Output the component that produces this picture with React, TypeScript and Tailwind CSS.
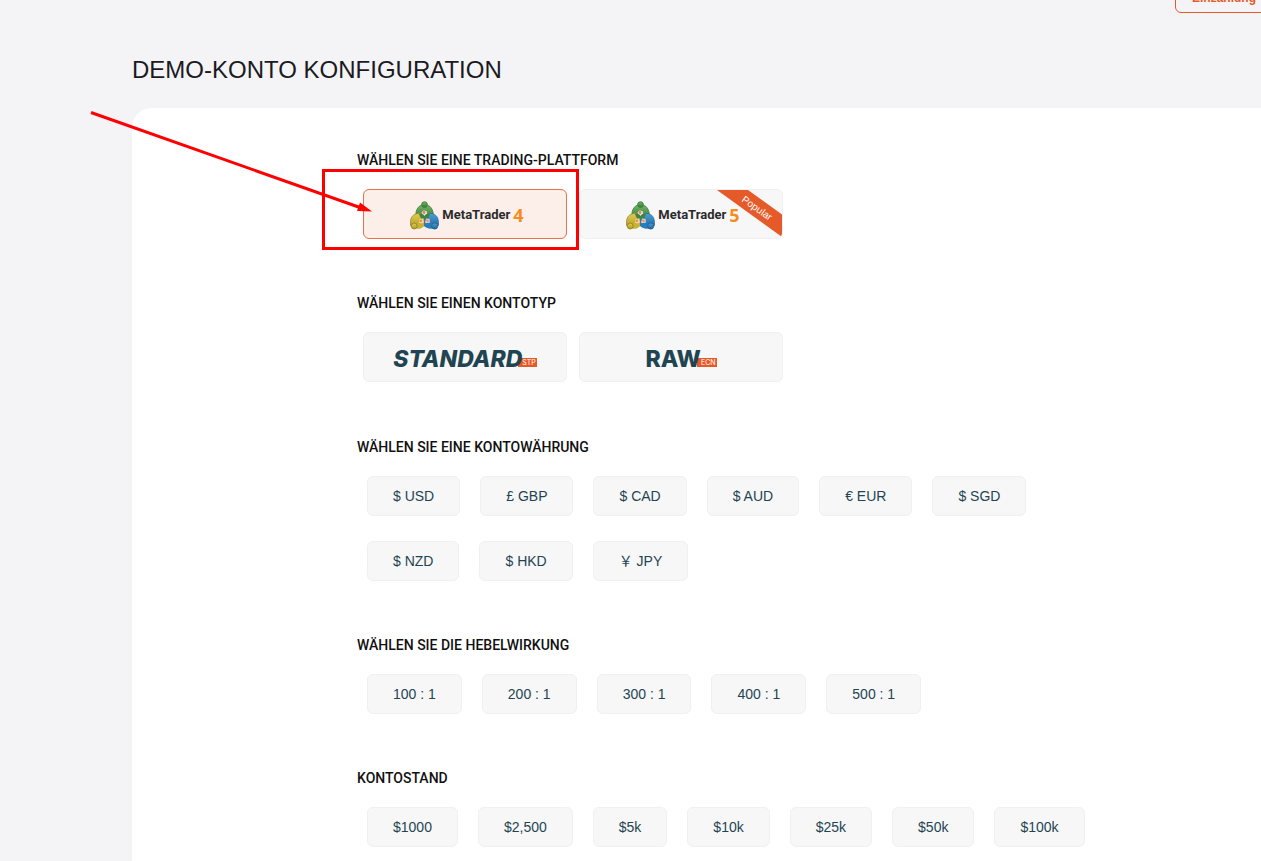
import type { ReactNode } from "react";

const currencies = [
  "$ USD",
  "£ GBP",
  "$ CAD",
  "$ AUD",
  "€ EUR",
  "$ SGD",
  "$ NZD",
  "$ HKD",
  "￥ JPY",
];
const leverages = ["100 : 1", "200 : 1", "300 : 1", "400 : 1", "500 : 1"];
const balances = ["$1000", "$2,500", "$5k", "$10k", "$25k", "$50k", "$100k"];

function Section({ title, children }: { title: string; children: ReactNode }) {
  return (
    <section>
      <h2 className="mb-[19px] text-sm font-medium text-[#111111] font-['Roboto',sans-serif]">
        {title}
      </h2>
      {children}
    </section>
  );
}

function Chips({ options }: { options: string[] }) {
  return (
    <div className="ml-2.5 flex max-w-[730px] flex-wrap gap-x-5 gap-y-[25px]">
      {options.map((option) => (
        <button
          key={option}
          type="button"
          className="h-10 rounded-md border border-[#f0f0f0] bg-[#f7f7f7] px-[25px] text-sm text-[#1f4552]"
        >
          {option}
        </button>
      ))}
    </div>
  );
}

function Tile({ selected, children }: { selected?: boolean; children: ReactNode }) {
  return (
    <button
      type="button"
      aria-pressed={selected ?? false}
      className={
        selected
          ? "relative flex h-[50px] w-[204px] items-center justify-center rounded-md border border-[#e8704a] bg-[#fceee9]"
          : "relative flex h-[50px] w-[204px] items-center justify-center overflow-hidden rounded-md border border-[#f0f0f0] bg-[#f7f7f7]"
      }
    >
      {children}
    </button>
  );
}

function MetaIcon() {
  return (
    <svg width="29" height="29" viewBox="0 0 29 29" aria-hidden="true">
      <defs>
        <linearGradient id="green" x1="0" y1="0" x2="0" y2="1">
          <stop offset="0" stopColor="#79b266" />
          <stop offset="1" stopColor="#2f7d35" />
        </linearGradient>
        <linearGradient id="yellow" x1="0" y1="0" x2="0" y2="1">
          <stop offset="0" stopColor="#ddcc55" />
          <stop offset="1" stopColor="#b39b1c" />
        </linearGradient>
        <linearGradient id="blue" x1="0" y1="0" x2="0" y2="1">
          <stop offset="0" stopColor="#4d9fd4" />
          <stop offset="1" stopColor="#1b64a3" />
        </linearGradient>
      </defs>
      <path d="M6 15.500C5 8.500 9 3.500 14.500 3.500S24 8.500 23.200 15.500l-2 3H8Z" fill="url(#green)" stroke="#3b7538" strokeWidth=".7" />
      <path d="M.6 24.500C-.6 17 3 12.500 8.500 12.500c4.500 0 6.300 3.500 6.300 7.500 0 4-2.800 7.500-6.800 7Z" fill="url(#yellow)" stroke="#8c7e2c" strokeWidth=".7" />
      <path d="M28.400 24.500c1-7.500-2.500-12-7.700-12-3.700 0-5.900 3.500-6.200 7-.4 4.500 3 8 7 7.500Z" fill="url(#blue)" stroke="#2a6699" strokeWidth=".7" />
      <path d="m11.500 11.500 2-2 3 .5 1 3.500-1.500 2.500H13Z" fill="#dce9da" />
      <path d="M9 13.500c2-1.500 4-1 5.500 1.500 1.500-2.500 3.500-3 5.500-1.500l-2 4h-7Z" fill="#3f8241" />
      <path d="m9.500 18 3-.5 1.500 3.500-1.500 2H9Z" fill="#f0d4ae" />
      <path d="m19.500 18-3-.5-1.500 3.500 1.500 2H20Z" fill="#ead6cd" />
      <circle cx="14" cy="11.500" r="1.400" fill="#ee8052" />
      <circle cx="10.800" cy="19.800" r="1.300" fill="#ef8b42" />
      <circle cx="17.500" cy="19.800" r="1.300" fill="#f08d60" />
      <path d="M4 25c3-4.500 7-2.500 10.300-2.500V25c-3 3-7 3-10.300 2Z" fill="#c7b333" />
      <path d="M25 25c-3-4.500-7-3-11-2.500V25c3 3 8 3 11 2Z" fill="#297dba" />
      <circle cx="14.500" cy="3.600" r="2.900" fill="url(#green)" stroke="#397b39" strokeWidth=".8" />
      <circle cx="4.200" cy="25" r="3" fill="url(#yellow)" stroke="#8c7c24" strokeWidth=".8" />
      <circle cx="24.700" cy="25" r="3.100" fill="url(#blue)" stroke="#225f91" strokeWidth=".8" />
    </svg>
  );
}

function MetaLogo({ version }: { version: string }) {
  return (
    <span className="flex items-center gap-[3px] pt-0.5 pl-1 font-['Open_Sans',sans-serif] text-[#2b2b2b]">
      <MetaIcon />
      <span className="text-[13px] leading-6 font-bold font-['Roboto',sans-serif]">MetaTrader</span>
      <span className="text-lg leading-6 font-bold text-[#f68b1f]">{version}</span>
    </span>
  );
}

function AccountLogo({ name, tag, italic }: { name: string; tag: string; italic?: boolean }) {
  return (
    <span className="flex items-end pt-1 font-['Inter',sans-serif] text-[#1f4552]">
      <span
        className={
          italic
            ? "z-10 text-[23px] leading-6 font-extrabold italic"
            : "z-10 text-[23px] leading-6 font-extrabold"
        }
      >
        {name}
      </span>
      <span className="mb-1 -ml-1 h-[9px] bg-[#e55a28] pr-px pl-1 text-[7px] leading-[9px] text-white">
        {tag}
      </span>
    </span>
  );
}

export default function App() {
  return (
    <div className="flex min-h-screen flex-col overflow-hidden bg-[#f4f4f7] font-['Liberation_Sans','Noto_Sans_CJK_JP',sans-serif]">
      <header className="-mt-[17px] -mr-3 flex justify-end">
        <button
          type="button"
          className="h-[30px] rounded-md border border-[#e55a28] px-4 text-xs font-bold text-[#e55a28]"
        >
          Einzahlung
        </button>
      </header>
      <h1 className="mt-[41px] ml-[132px] text-2xl text-[#1b1b1f]">DEMO-KONTO KONFIGURATION</h1>
      <main className="mt-[22px] ml-[132px] flex grow flex-col gap-[54px] rounded-tl-[20px] bg-white pt-[42px] pb-[11px] pl-[225px]">
        <Section title="WÄHLEN SIE EINE TRADING-PLATTFORM">
          <div className="relative ml-1.5 flex gap-3">
            <Tile selected>
              <MetaLogo version="4" />
            </Tile>
            <Tile>
              <MetaLogo version="5" />
              <svg className="absolute top-0 right-0" width="65" height="48" viewBox="0 0 65 48">
                <path d="M0 0H31L65 24.500V47Z" fill="#e55a28" />
                <text
                  x="24"
                  y="11"
                  transform="rotate(35 24 11)"
                  fill="#fff"
                  className="font-['Liberation_Sans',sans-serif] text-[10px]"
                >
                  Popular
                </text>
              </svg>
            </Tile>
            <div className="pointer-events-none absolute -top-5 -left-[41px] h-[81px] w-[257px] border-3 border-[#ff0000]" />
            <svg
              className="pointer-events-none absolute -top-[79px] -left-[273px]"
              width="284"
              height="106"
              viewBox="90 110 284 106"
              aria-hidden="true"
            >
              <path d="M91 112.500 360 207.500" stroke="#ff0000" strokeWidth="3" />
              <path d="M372 211.500 360 202.500 357 211Z" fill="#ff0000" />
            </svg>
          </div>
        </Section>
        <Section title="WÄHLEN SIE EINEN KONTOTYP">
          <div className="ml-1.5 flex gap-3 pb-px">
            <Tile>
              <AccountLogo name="STANDARD" tag="STP" italic />
            </Tile>
            <Tile>
              <AccountLogo name="RAW" tag="ECN" />
            </Tile>
          </div>
        </Section>
        <Section title="WÄHLEN SIE EINE KONTOWÄHRUNG">
          <Chips options={currencies} />
        </Section>
        <Section title="WÄHLEN SIE DIE HEBELWIRKUNG">
          <Chips options={leverages} />
        </Section>
        <Section title="KONTOSTAND">
          <Chips options={balances} />
        </Section>
      </main>
    </div>
  );
}
